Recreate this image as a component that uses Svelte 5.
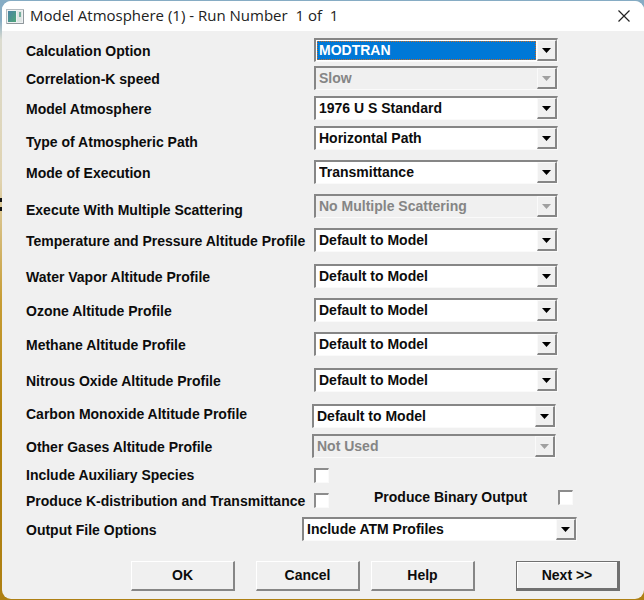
<script lang="ts">
  interface Field {
    id: string;
    label: string;
    value: string;
    options: string[];
    size: 'xs' | 's' | 'm' | 'l';
    text?: 'low' | 'high';
    disabled?: boolean;
    selected?: boolean;
    inset?: boolean;
  }

  const profile = ['Default to Model', 'Tropical', 'Mid-Latitude Summer', 'Mid-Latitude Winter', '1976 U S Standard'];

  let fields: Field[] = $state([
    { id: 'calc', label: 'Calculation Option', value: 'MODTRAN', options: ['MODTRAN', 'LOWTRAN'], size: 'xs', selected: true },
    { id: 'speed', label: 'Correlation-K speed', value: 'Slow', options: ['Slow', 'Medium', 'Fast'], size: 's', disabled: true },
    { id: 'atmosphere', label: 'Model Atmosphere', value: '1976 U S Standard', options: profile.slice(1), size: 's' },
    { id: 'path', label: 'Type of Atmospheric Path', value: 'Horizontal Path', options: ['Horizontal Path', 'Slant Path'], size: 'm', text: 'low' },
    { id: 'mode', label: 'Mode of Execution', value: 'Transmittance', options: ['Transmittance', 'Radiance'], size: 'm' },
    { id: 'scatter', label: 'Execute With Multiple Scattering', value: 'No Multiple Scattering', options: ['No Multiple Scattering'], size: 'm', text: 'low', disabled: true },
    { id: 'temp', label: 'Temperature and Pressure Altitude Profile', value: profile[0], options: profile, size: 'l' },
    { id: 'water', label: 'Water Vapor Altitude Profile', value: profile[0], options: profile, size: 'm' },
    { id: 'ozone', label: 'Ozone Altitude Profile', value: profile[0], options: profile, size: 'm' },
    { id: 'methane', label: 'Methane Altitude Profile', value: profile[0], options: profile, size: 'l' },
    { id: 'nitrous', label: 'Nitrous Oxide Altitude Profile', value: profile[0], options: profile, size: 'l' },
    { id: 'carbon', label: 'Carbon Monoxide Altitude Profile', value: profile[0], options: profile, size: 's', text: 'high', inset: true },
    { id: 'other', label: 'Other Gases Altitude Profile', value: 'Not Used', options: ['Not Used'], size: 'm', disabled: true, inset: true },
  ]);

  let auxiliary = $state(false);
  let kDistribution = $state(false);
  let binary = $state(false);
  let output = $state('Include ATM Profiles');
</script>

{#snippet arrow()}
  <span class="arrow" aria-hidden="true">
    <svg width="9" height="5" viewBox="0 0 9 5"><path d="M0 0h9L4.5 5z" fill="currentColor" /></svg>
  </span>
{/snippet}

<main class="window">
  <header>
    <svg class="app-icon" width="18" height="15" viewBox="0 0 18 15" aria-hidden="true">
      <defs>
        <linearGradient id="pane" x1="0" y1="0" x2="1" y2="1">
          <stop offset="0" stop-color="#4a82a4" />
          <stop offset="1" stop-color="#4fa679" />
        </linearGradient>
      </defs>
      <rect x=".5" y=".5" width="17" height="14" fill="#eef1f2" stroke="#b4bbc0" />
      <path d="M1 14.5h16.5V1" fill="none" stroke="#8f979c" />
      <rect x="2" y="2" width="8" height="11" fill="url(#pane)" />
      <rect x="11" y="2" width="5" height="11" fill="#dfe5e4" />
      <rect x="13" y="3" width="2" height="5" fill="#75af9c" />
    </svg>
    <h1>Model Atmosphere (1) - Run Number&nbsp; 1 of&nbsp; 1</h1>
    <button class="close" aria-label="Close">
      <svg width="12" height="12" viewBox="0 0 12 12"><path d="M.5.5l11 11M11.5.5l-11 11" stroke="#222" stroke-width="1.2" /></svg>
    </button>
  </header>

  <form onsubmit={(e) => e.preventDefault()}>
    {#each fields as field (field.id)}
      <div class="row {field.size}" class:inset={field.inset}>
        <label class={field.text} for={field.id}>{field.label}</label>
        <div class="combo" class:disabled={field.disabled} class:selected={field.selected}>
          <select id={field.id} bind:value={field.value} disabled={field.disabled}>
            {#each field.options as option}
              <option>{option}</option>
            {/each}
          </select>
          {@render arrow()}
        </div>
      </div>
    {/each}

    <div class="row check">
      <label for="auxiliary">Include Auxiliary Species</label>
      <input id="auxiliary" type="checkbox" bind:checked={auxiliary} />
    </div>
    <div class="row check double">
      <label for="kdist">Produce K-distribution and Transmittance</label>
      <input id="kdist" type="checkbox" bind:checked={kDistribution} />
      <label class="binary" for="binary">Produce Binary Output</label>
      <input class="binary" id="binary" type="checkbox" bind:checked={binary} />
    </div>
    <div class="row output">
      <label for="output">Output File Options</label>
      <div class="combo">
        <select id="output" bind:value={output}>
          <option>Include ATM Profiles</option>
          <option>No ATM Profiles</option>
        </select>
        {@render arrow()}
      </div>
    </div>

    <footer>
      <button class="ok" type="button">OK</button>
      <button class="cancel" type="button">Cancel</button>
      <button class="help" type="button">Help</button>
      <button class="next" type="submit">Next &gt;&gt;</button>
    </footer>
  </form>
</main>

<style>
  :global(body) {
    min-height: 100vh;
    box-sizing: border-box;
    padding: 1px 0 1px 2px;
    background:
      linear-gradient(#111, #111) 0 198px / 2px 4px no-repeat,
      linear-gradient(#111, #111) 0 207px / 2px 4px no-repeat,
      linear-gradient(#86acc4 0, #86acc4 20px, #dcdcd0 40px, #e0d3b0 180px, #c79d35 300px, #b3840f 420px, #ae8014 100%);
  }

  .window {
    overflow: hidden;
    border-radius: 9px;
    background: #f0f0f0;
    color: #0c0c0c;
    font: bold 14px/16px "Liberation Sans", Arial, sans-serif;
  }

  header {
    display: flex;
    align-items: center;
    height: 30px;
    padding: 0 14px 0 4px;
    background: #fff;
  }

  h1 {
    flex: 1;
    margin: 0 0 2px 6px;
    color: #222;
    font: 15px/20px "Open Sans", "Noto Sans", sans-serif;
  }

  .close {
    display: flex;
    padding: 0;
    border: 0;
    background: none;
  }

  form {
    padding: 7px 0 8px 24px;
  }

  .row {
    display: grid;
    grid-template-columns: 288fr 244fr 86fr;
    align-items: start;
  }

  .inset {
    grid-template-columns: 286fr 244fr 88fr;
  }

  .xs { height: 28px; }
  .s { height: 30px; }
  .m { height: 34px; }
  .l { height: 36px; }

  label {
    line-height: 26px;
    white-space: nowrap;
  }

  label.low {
    line-height: 32px;
  }

  label.high {
    line-height: 20px;
  }

  /* Sunken drop-downs */
  .combo {
    position: relative;
    height: 24px;
    box-sizing: border-box;
    border: 2px solid #868686;
    border-right: 1px solid #fafafa;
    border-bottom: 1px solid #fafafa;
    background: #fff;
  }

  select {
    display: block;
    width: 100%;
    height: 100%;
    padding: 0 22px 1px 3px;
    border: 0;
    border-radius: 0;
    outline: 0;
    appearance: none;
    background: transparent;
    color: inherit;
    font: inherit;
  }

  .disabled {
    background: #f0f0f0;
    color: #858585;
  }

  .disabled select {
    opacity: 1;
  }

  .selected {
    color: #fff;
  }

  .selected select {
    background: linear-gradient(#0078d7, #0078d7) 1px 1px / calc(100% - 22px) calc(100% - 2px) no-repeat;
  }

  .selected::before {
    content: '';
    position: absolute;
    z-index: 1;
    inset: 1px 21px 1px 1px;
    border: 1px dotted #c56b25;
    pointer-events: none;
  }

  .arrow {
    position: absolute;
    top: 0;
    right: 0;
    bottom: 0;
    display: flex;
    align-items: center;
    justify-content: center;
    width: 20px;
    box-sizing: border-box;
    border: 1px solid #fafafa;
    border-right: 2px solid #868686;
    border-bottom: 2px solid #868686;
    background: #f0f0f0;
    color: #000;
    pointer-events: none;
  }

  .disabled .arrow {
    color: #a0a0a0;
  }

  /* Tick boxes */
  .check {
    height: 22px;
  }

  .check label {
    line-height: 14px;
  }

  input {
    width: 15px;
    height: 15px;
    margin: 0;
    border: 2px solid #8c8c8c;
    border-right: 1px solid #fafafa;
    border-bottom: 1px solid #fafafa;
    appearance: none;
    background: #fff;
  }

  input:checked {
    background: radial-gradient(#000 40%, #fff 45%);
  }

  .double {
    grid-template-columns: 288fr 60fr 184fr 86fr;
    align-items: end;
    height: 18px;
    margin-bottom: 9px;
  }

  .check .binary {
    align-self: start;
  }

  .output {
    grid-template-columns: 276fr 275fr 67fr;
  }

  /* Raised push buttons */
  footer {
    display: grid;
    grid-template-columns: 105fr 104fr 21fr 104fr 11fr 104fr 41fr 104fr 24fr;
    margin-top: 18px;
  }

  footer button {
    height: 30px;
    padding: 0 0 2px;
    border: 1px solid #fff;
    border-right: 2px solid #868686;
    border-bottom: 2px solid #868686;
    background: #f0f0f0;
    color: inherit;
    font: inherit;
  }

  .ok { grid-column: 2; }
  .cancel { grid-column: 4; }
  .help { grid-column: 6; }

  footer .next {
    grid-column: 8;
    padding: 0;
    border: 1px solid #707070;
    border-right-width: 3px;
    border-bottom-width: 3px;
    box-shadow: inset 1px 1px #fff;
  }
</style>
